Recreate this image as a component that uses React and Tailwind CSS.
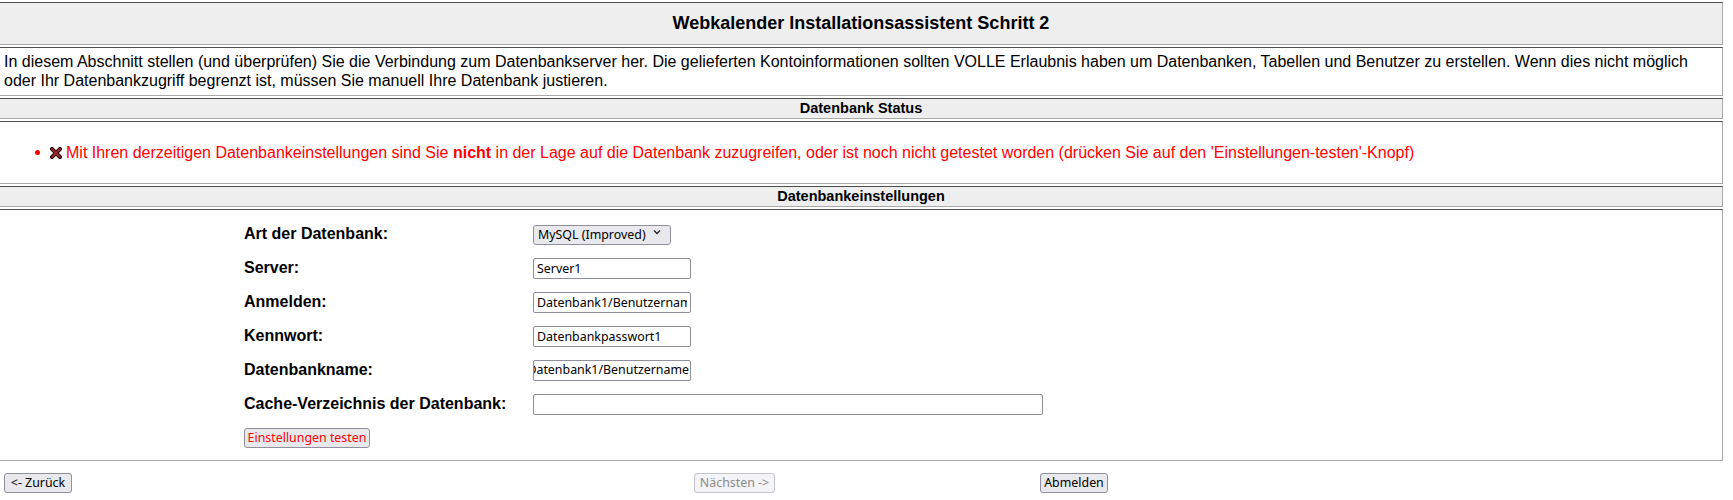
import React from 'react';

const cell = 'border-t border-t-[#4d4d4d] border-b border-b-[#aaaaaa] border-r border-r-[#aaaaaa]';
const ctrl = "font-['Noto_Sans',sans-serif] text-[12.4px] whitespace-nowrap";

function FieldRow({ label, children }) {
  return (
    <div className="flex items-center h-[34px]">
      <div className="w-[289px] text-[16px] font-bold">{label}</div>
      <div className="flex items-center">{children}</div>
    </div>
  );
}

function TextBox({ value, width = 'w-[158px]', alignEnd = false }) {
  if (alignEnd) {
    // Feld ist nach rechts gescrollt, Anfang abgeschnitten
    return (
      <div className={`${width} h-[21px] border border-[#8f8f9d] rounded-[2px] bg-white flex items-center justify-end overflow-hidden pr-[1px] text-black ${ctrl}`}>
        {value}
      </div>
    );
  }
  return (
    <input
      type="text"
      defaultValue={value}
      className={`${width} h-[21px] border border-[#8f8f9d] rounded-[2px] bg-white px-[3px] outline-none text-black ${ctrl}`}
    />
  );
}

function Btn({ children, className = '', disabled = false }) {
  return (
    <button
      disabled={disabled}
      className={`h-[20px] rounded-[3px] border flex items-center justify-center leading-none ${ctrl} ${
        disabled
          ? 'bg-[#f4f4f6] border-[#c4c4cc] text-[#8a8a8a]'
          : 'bg-[#e9e9ed] border-[#8f8f9d]'
      } ${className}`}
    >
      {children}
    </button>
  );
}

export default function App() {
  return (
    <div className="bg-white min-h-[500px] pt-[2px] font-['Liberation_Sans',Arial,sans-serif] text-black">
      <div className="w-[1723px] flex flex-col gap-[2px]">
        {/* Titel */}
        <div className={`${cell} h-[43px] bg-[#eeeeee] flex items-center justify-center`}>
          <h1 className="text-[18px] font-bold">Webkalender Installationsassistent Schritt 2</h1>
        </div>

        {/* Beschreibung */}
        <div className={`${cell} h-[49px] px-[4px] flex items-center`}>
          <p className="text-[16px] leading-[18.5px]">
            In diesem Abschnitt stellen (und überprüfen) Sie die Verbindung zum Datenbankserver her. Die gelieferten Kontoinformationen sollten VOLLE Erlaubnis haben um Datenbanken, Tabellen und Benutzer zu erstellen. Wenn dies nicht möglich
            <br />
            oder Ihr Datenbankzugriff begrenzt ist, müssen Sie manuell Ihre Datenbank justieren.
          </p>
        </div>

        {/* Status */}
        <div className={`${cell} h-[21px] bg-[#eeeeee] flex items-center justify-center`}>
          <span className="text-[14.5px] font-bold">Datenbank Status</span>
        </div>
        <div className={`${cell} h-[63px] flex items-center`}>
          <ul className="flex items-center text-[16px] text-[#ff0000]">
            <li className="flex items-center">
              <span className="ml-[35px] w-[5px] h-[5px] rounded-full bg-[#ff0000]" />
              <svg className="ml-[10px] w-[12px] h-[12px]" viewBox="0 0 12 12">
                <path d="M2 2 L10 10 M10 2 L2 10" stroke="#2a0a0a" strokeWidth="4" strokeLinecap="square" />
                <path d="M2.3 2.3 L9.7 9.7 M9.7 2.3 L2.3 9.7" stroke="#9a2a2a" strokeWidth="2" strokeLinecap="square" />
              </svg>
              <span className="ml-[4px]">
                Mit Ihren derzeitigen Datenbankeinstellungen sind Sie <b>nicht</b> in der Lage auf die Datenbank zuzugreifen, oder ist noch nicht getestet worden (drücken Sie auf den 'Einstellungen-testen'-Knopf)
              </span>
            </li>
          </ul>
        </div>

        {/* Einstellungen */}
        <div className={`${cell} h-[21px] bg-[#eeeeee] flex items-center justify-center`}>
          <span className="text-[14.5px] font-bold">Datenbankeinstellungen</span>
        </div>
        <div className={`${cell} h-[252px] pt-[7px] pl-[244px]`}>
          <FieldRow label="Art der Datenbank:">
            <div className="relative">
              <select className={`appearance-none w-[138px] h-[20px] bg-[#e9e9ed] border border-[#8f8f9d] rounded-[3px] pl-[4px] outline-none text-black ${ctrl}`}>
                <option>MySQL (Improved)</option>
                <option>MySQL</option>
                <option>PostgreSQL</option>
                <option>SQLite</option>
              </select>
              <svg className="absolute right-[10px] top-[7px] w-[8px] h-[6px] pointer-events-none" viewBox="0 0 8 6">
                <path d="M1 1.5 L4 4.5 L7 1.5" fill="none" stroke="#222" strokeWidth="1.3" />
              </svg>
            </div>
          </FieldRow>
          <FieldRow label="Server:">
            <TextBox value="Server1" />
          </FieldRow>
          <FieldRow label="Anmelden:">
            <TextBox value="Datenbank1/Benutzername" />
          </FieldRow>
          <FieldRow label="Kennwort:">
            <TextBox value="Datenbankpasswort1" />
          </FieldRow>
          <FieldRow label="Datenbankname:">
            <TextBox value="Datenbank1/Benutzername" alignEnd />
          </FieldRow>
          <FieldRow label="Cache-Verzeichnis der Datenbank:">
            <TextBox value="" width="w-[510px]" />
          </FieldRow>
          <div className="flex items-center h-[34px]">
            <Btn className="w-[126px] h-[19px] text-[#ff0000]">Einstellungen testen</Btn>
          </div>
        </div>
      </div>

      {/* Navigation */}
      <div className="flex items-center mt-[12px] pl-[4px]">
        <Btn className="w-[68px] text-black">&lt;- Zurück</Btn>
        <Btn disabled className="w-[81px] ml-[622px]">Nächsten -&gt;</Btn>
        <Btn className="w-[68px] ml-[265px] text-black">Abmelden</Btn>
      </div>
    </div>
  );
}
